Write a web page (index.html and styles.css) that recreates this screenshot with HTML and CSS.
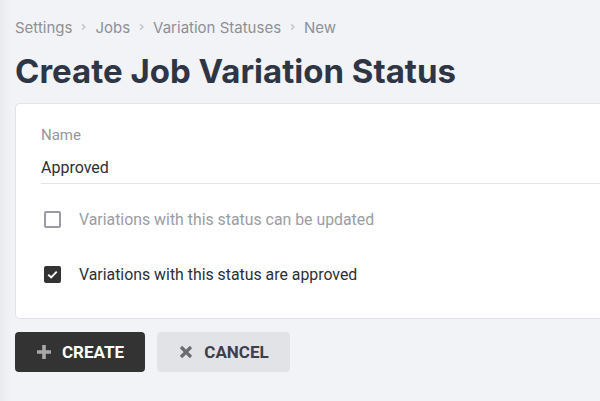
FILE: index.html
```html
<!DOCTYPE html>
<html>
<head>
<meta charset="utf-8">
<link rel="stylesheet" href="styles.css">
</head>
<body>
<div class="page">
  <nav class="crumbs">
    <span>Settings</span>
    <svg class="sep" viewBox="0 0 10 10"><path d="M3.5 2 L6.5 5 L3.5 8" /></svg>
    <span>Jobs</span>
    <svg class="sep" viewBox="0 0 10 10"><path d="M3.5 2 L6.5 5 L3.5 8" /></svg>
    <span>Variation Statuses</span>
    <svg class="sep" viewBox="0 0 10 10"><path d="M3.5 2 L6.5 5 L3.5 8" /></svg>
    <span>New</span>
  </nav>
  <h1 class="title">Create Job Variation Status</h1>
  <div class="card">
    <label class="field">
      <span class="field-label">Name</span>
      <span class="field-value">Approved</span>
    </label>
    <div class="check-row">
      <span class="box"></span>
      <span class="check-label muted">Variations with this status can be updated</span>
    </div>
    <div class="check-row">
      <span class="box checked"><svg viewBox="0 0 18 18"><path d="M4.5 9.2 L7.6 12.2 L13.5 6" /></svg></span>
      <span class="check-label">Variations with this status are approved</span>
    </div>
  </div>
  <div class="actions">
    <button class="btn btn-primary"><svg class="ico" viewBox="0 0 16 16"><path d="M8 1 V15 M1 8 H15" /></svg>CREATE</button>
    <button class="btn btn-secondary"><svg class="ico" viewBox="0 0 16 16"><path d="M3 3 L13 13 M13 3 L3 13" /></svg>CANCEL</button>
  </div>
</div>
</body>
</html>
```
FILE: styles.css
```css
html, body {
  margin: 0;
  height: 100%;
}
body {
  background: linear-gradient(to right, #e9eaed 0px, #f2f3f6 12px, #f2f3f6 100%);
  font-family: Roboto, "Liberation Sans", sans-serif;
  overflow: hidden;
}
.page {
  padding: 17px 0 0 15px;
}
.crumbs {
  display: flex;
  align-items: center;
  gap: 7px;
  font-family: Inter, sans-serif;
  font-size: 15px;
  color: #8d9097;
  height: 20px;
}
.sep {
  width: 9px;
  height: 10px;
  fill: none;
  stroke: #c4c6cb;
  stroke-width: 1.8;
}
.title {
  font-family: Inter, sans-serif;
  font-weight: 700;
  font-size: 33px;
  color: #2e3645;
  margin: 14px 0 0 0;
  line-height: 40px;
}
.card {
  margin-top: 12px;
  background: #fff;
  border: 1px solid #e1e3e7;
  border-right: none;
  border-radius: 5px 0 0 5px;
  padding: 22px 0 35px 25px;
}
.field {
  display: flex;
  flex-direction: column;
  border-bottom: 1px solid #e3e4e7;
}
.field-label {
  font-size: 15px;
  color: #94979d;
  line-height: 18px;
}
.field-value {
  font-size: 16px;
  color: #2b2f36;
  margin-top: 15px;
  line-height: 18px;
  padding-bottom: 6px;
}
.check-row {
  display: flex;
  align-items: center;
  gap: 18px;
  padding-left: 3px;
  height: 18px;
}
.field + .check-row {
  margin-top: 26px;
}
.check-row + .check-row {
  margin-top: 37px;
}
.box {
  width: 13px;
  height: 13px;
  border: 2px solid #9a9ca3;
  border-radius: 2px;
  flex: none;
  display: flex;
}
.box.checked {
  background: #333333;
  border-color: #333333;
}
.box svg {
  width: 17px;
  height: 17px;
  margin: -2px;
  fill: none;
  stroke: #fff;
  stroke-width: 2;
}
.check-label {
  font-size: 15.85px;
  color: #2b2f36;
}
.check-label.muted {
  color: #9a9da3;
}
.actions {
  display: flex;
  gap: 12px;
  margin-top: 13px;
}
.btn {
  display: flex;
  align-items: center;
  justify-content: center;
  gap: 10px;
  height: 40px;
  border: none;
  border-radius: 4px;
  font-family: Roboto, sans-serif;
  font-weight: 700;
  font-size: 17px;
  padding: 0;
}
.btn-primary {
  width: 130px;
  background: #333333;
  color: #fff;
}
.btn-primary .ico {
  stroke: #a9a9a9;
  stroke-width: 3.6;
}
.btn-secondary {
  width: 133px;
  background: #e2e3e7;
  color: #3c4049;
}
.btn-secondary .ico {
  stroke: #6a6c70;
  stroke-width: 3.2;
}
.ico {
  width: 16px;
  height: 16px;
  fill: none;
}
```
